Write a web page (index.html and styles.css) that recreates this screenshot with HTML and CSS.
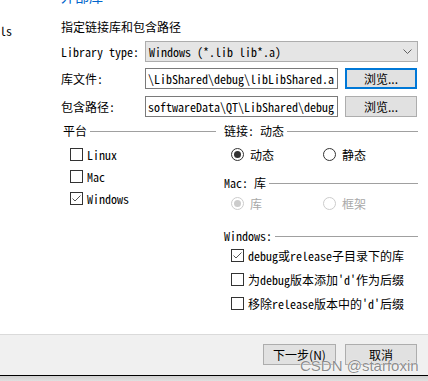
FILE: index.html
```html
<!DOCTYPE html>
<html lang="zh-CN">

<head>
  <meta charset="UTF-8" />
  <meta name="viewport" content="width=device-width, initial-scale=1.0" />
  <title>添加库</title>
  <link rel="stylesheet" href="styles.css">
</head>

<body>
  <article class="window">
    <section class="content">
      <aside class="side">
        <span class="side-label">ls</span>
      </aside>
      <section class="main">
        <div class="crumb">外部库</div>
        <div class="title">指定链接库和包含路径</div>

        <div class="field">
          <span class="field-label">Library type:</span>
          <div class="combo">
            <span>Windows (*.lib lib*.a)</span>
            <svg class="chevron" width="9" height="5" viewBox="0 0 9 5">
              <polyline points="0.5,0.5 4.5,4.5 8.5,0.5" fill="none" stroke="#606060" stroke-width="1" />
            </svg>
          </div>
        </div>

        <div class="field">
          <span class="field-label">库文件:</span>
          <div class="input"><span>\LibShared\debug\libLibShared.a</span></div>
          <div class="btn btn-browse btn-focus">浏览...</div>
        </div>

        <div class="field field-include">
          <span class="field-label">包含路径:</span>
          <div class="input"><span>softwareData\QT\LibShared\debug</span></div>
          <div class="btn btn-browse">浏览...</div>
        </div>

        <section class="groups">
          <section class="group">
            <div class="group-title"><span>平台</span></div>
            <div class="checks">
              <div class="check"><span class="box"></span>Linux</div>
              <div class="check"><span class="box"></span>Mac</div>
              <div class="check">
                <span class="box">
                  <svg width="11" height="11" viewBox="0 0 11 11">
                    <polyline points="1.5,5.5 4,8 9.5,2.5" fill="none" stroke="#555" stroke-width="1" />
                  </svg>
                </span>Windows
              </div>
            </div>
          </section>

          <section class="group">
            <div class="group-title"><span>链接: 动态</span></div>
            <div class="radios">
              <div class="radio"><span class="dot checked"></span>动态</div>
              <div class="radio"><span class="dot"></span>静态</div>
            </div>

            <div class="group-title group-mac"><span>Mac: 库</span></div>
            <div class="radios radios-mac disabled">
              <div class="radio"><span class="dot checked"></span>库</div>
              <div class="radio"><span class="dot"></span>框架</div>
            </div>

            <div class="group-title group-win"><span>Windows:</span></div>
            <div class="win-checks">
              <div class="check">
                <span class="box">
                  <svg width="11" height="11" viewBox="0 0 11 11">
                    <polyline points="1.5,5.5 4,8 9.5,2.5" fill="none" stroke="#555" stroke-width="1" />
                  </svg>
                </span>debug或release子目录下的库
              </div>
              <div class="check"><span class="box"></span>为debug版本添加'd'作为后缀</div>
              <div class="check"><span class="box"></span>移除release版本中的'd'后缀</div>
            </div>
          </section>
        </section>
      </section>
    </section>

    <footer class="footer">
      <div class="btn btn-next">下一步(N)</div>
      <div class="btn btn-cancel">取消</div>
    </footer>
    <div class="edge"></div>

    <div class="watermark">CSDN @starfoxin</div>
  </article>
</body>

</html>
```

FILE: styles.css
```css
* {
  box-sizing: border-box;
}

body {
  margin: 0;
  background: #fff;
  font-family: "Noto Sans Mono CJK SC", "Noto Sans CJK SC", monospace;
  font-size: 12px;
  color: #000;
}

.window {
  position: relative;
  width: 428px;
  height: 381px;
  overflow: hidden;
  display: flex;
  flex-direction: column;
}

.content {
  display: flex;
  height: 334px;
  overflow: hidden;
}

.side {
  width: 61px;
  padding-top: 24px;
  line-height: 14px;
}

.main {
  width: 357px;
}

.crumb {
  margin-top: -11px;
  line-height: 14px;
  font-size: 14px;
  color: #0066cc;
}

.title {
  margin-top: 17px;
  line-height: 14px;
  font-family: "Noto Sans CJK SC", sans-serif;
  font-size: 12px;
}

.field {
  display: flex;
  align-items: center;
  height: 21px;
  margin-top: 6px;
}

.title + .field {
  margin-top: 7px;
}

.field-include {
  margin-top: 7px;
}

.field-label {
  width: 84px;
  flex: none;
}

.combo {
  flex: 1;
  height: 21px;
  display: flex;
  align-items: center;
  justify-content: space-between;
  padding: 0 5px 0 3px;
  background: #e5e5e5;
  border: 1px solid #adadad;
  white-space: nowrap;
}

.chevron {
  display: block;
}

.input {
  width: 193px;
  height: 21px;
  display: flex;
  align-items: center;
  justify-content: flex-end;
  overflow: hidden;
  white-space: nowrap;
  padding: 0 3px 0 1px;
  border: 1px solid #7a7a7a;
}

.btn {
  display: flex;
  align-items: center;
  justify-content: center;
  height: 21px;
  background: #e1e1e1;
  border: 1px solid #adadad;
  font-family: "Noto Sans CJK SC", sans-serif;
}

.btn-browse {
  width: 72px;
  margin-left: 7px;
}

.btn-focus {
  border: 2px solid #0078d7;
}

.groups {
  display: grid;
  grid-template-columns: 153px 194px;
  column-gap: 8px;
  padding-left: 2px;
  margin-top: 7px;
}

.group-title {
  display: flex;
  align-items: center;
  gap: 3px;
  line-height: 14px;
  white-space: nowrap;
}

.group-title::after {
  content: "";
  flex: 1;
  border-top: 1px solid #a0a0a0;
}

.checks {
  margin-top: 5px;
}

.check {
  display: flex;
  align-items: center;
  height: 22px;
  padding-left: 7px;
}

.box {
  width: 13px;
  height: 13px;
  margin-right: 4px;
  border: 1px solid #333;
  background: #fff;
  flex: none;
}

.box svg {
  display: block;
}

.radios {
  display: grid;
  grid-template-columns: 92px auto;
  height: 22px;
  margin-top: 5px;
  padding-left: 7px;
}

.radio {
  display: flex;
  align-items: center;
  font-family: "Noto Sans CJK SC", sans-serif;
}

.dot {
  width: 13px;
  height: 13px;
  margin-right: 6px;
  border: 1px solid #333;
  border-radius: 50%;
  display: flex;
  align-items: center;
  justify-content: center;
}

.dot.checked::after {
  content: "";
  width: 7px;
  height: 7px;
  border-radius: 50%;
  background: #333;
}

.group-mac {
  margin-top: 11px;
}

.radios-mac {
  margin-top: 2px;
}

.disabled .radio {
  color: #a8a8a8;
}

.disabled .dot {
  border-color: #cccccc;
}

.disabled .dot.checked::after {
  background: #cccccc;
}

.group-win {
  margin-top: 15px;
}

.win-checks .check {
  height: 24px;
}

.footer {
  display: flex;
  justify-content: flex-end;
  gap: 9px;
  height: 41px;
  padding: 9px 11px 0 0;
  background: #f0f0f0;
  border-top: 1px solid #dadada;
  font-family: "Noto Sans CJK SC", sans-serif;
}

.btn-next {
  width: 73px;
}

.btn-cancel {
  width: 72px;
}

.edge {
  flex: 1;
  border-top: 1px solid #000;
  background: linear-gradient(#cfcfcf, #e0e0e0);
}

.watermark {
  position: absolute;
  left: 300px;
  top: 357px;
  line-height: 17px;
  font-family: "Liberation Sans", Arial, sans-serif;
  font-size: 15px;
  color: rgba(120, 120, 120, 0.85);
  text-shadow: 0 0 1px #fff, 0 0 1px #fff;
  white-space: nowrap;
}
```
